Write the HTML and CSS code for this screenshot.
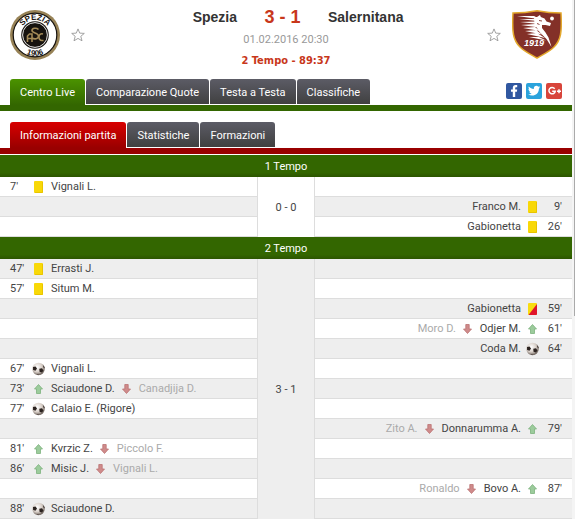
FILE: index.html
```html
<!DOCTYPE html>
<html lang="it">
  <head>
    <meta charset="UTF-8" />
    <meta name="viewport" content="width=device-width, initial-scale=1.0" />
    <title>Spezia - Salernitana 3-1</title>
    <link rel="stylesheet" href="styles.css">
  </head>
  <body>
    <!-- Icons -->
    <svg class="sprite" aria-hidden="true">
      <defs>
        <radialGradient id="ball-fill" cx="0.4" cy="0.35" r="0.65">
          <stop offset="0" stop-color="#fff" />
          <stop offset="0.6" stop-color="#d8cfc8" />
          <stop offset="1" stop-color="#6b6059" />
        </radialGradient>
        <symbol id="yellow" viewBox="0 0 14 14">
          <rect x="2" y="1" width="9" height="12" rx="1" fill="#f8d808" />
          <path d="M10.500 2v10.500H3" fill="none" stroke="#e8c400" />
        </symbol>
        <symbol id="yellowred" viewBox="0 0 14 14">
          <rect x="2" y="1" width="9" height="12" rx="1" fill="#f8dc10" />
          <path d="M11 2v10a1 1 0 0 1-1 1H2.500z" fill="#e0152b" />
        </symbol>
        <symbol id="up" viewBox="0 0 14 14">
          <path d="M6.500 2.500l4 4.500H8.500v4.500h-4V7h-2z" fill="#9ccb9c" stroke="#7db37d" stroke-width="0.800" />
        </symbol>
        <symbol id="down" viewBox="0 0 14 14">
          <path d="M6.500 11.500l4-4.500H8.200V2.500H4.800V7H2.500z" fill="#cf8b8b" stroke="#bb7272" stroke-width="0.800" />
        </symbol>
        <symbol id="ball" viewBox="0 0 14 14">
          <circle cx="6.500" cy="7" r="6.200" fill="url(#ball-fill)" />
          <path d="M1 5l2.500-.5 1.500 2L3.500 8.800 1.100 8z" fill="#2b2320" />
          <path d="M7.300 6.800l2.700-.6 1.500 2.200-1.500 2.200-2.500-.8z" fill="#2b2320" />
          <path d="M11 3l1.500 2 .1 1.500-1.300-1.300zM5.500 12l1.500.5-1.500.4z" fill="#3a302c" />
        </symbol>
        <symbol id="star" viewBox="0 0 14 14">
          <path d="M7 .9l1.700 4.200 4.600.3-3.500 2.900 1.200 4.500L7 10.400l-4 2.400 1.200-4.500L.7 5.400l4.600-.3z" fill="#fff" stroke="#999" stroke-width="0.900" />
        </symbol>
      </defs>
    </svg>

    <div class="page">
      <div class="match">
        <div class="team">
          <svg class="crest" viewBox="0 0 50 50" role="img" aria-label="Spezia">
            <circle cx="25" cy="25" r="25" fill="#978256" />
            <circle cx="25" cy="25" r="21.800" fill="#fff" stroke="#17130f" stroke-width="1.200" />
            <circle cx="25" cy="25" r="13.800" fill="#17130f" />
            <circle cx="25" cy="25" r="12.400" fill="none" stroke="#fff" stroke-width="0.900" />
            <path id="arc-top" d="M9.800 25a15.200 15.200 0 0 1 30.400 0" fill="none" />
            <path id="arc-bottom" d="M4.200 25a20.800 20.800 0 0 0 41.600 0" fill="none" />
            <text class="crest-text"><textPath href="#arc-top" startOffset="50%">SPEZIA</textPath></text>
            <text class="crest-text"><textPath href="#arc-bottom" startOffset="50%">1906</textPath></text>
            <g fill="none" stroke="#a38a58" stroke-width="1.600">
              <path d="M28.500 19.500c-2-2-6.500-1.500-6.500 1 0 2.800 6.500 2.200 6.500 5.500 0 3-4 3.500-6.500 2" />
              <path d="M17.500 32v-6l2-2h2.500v8M17.500 28.500h5" />
              <path d="M33 24c-5-1.500-5.500 6.500-1 6.500h1.500" />
            </g>
          </svg>
          <button class="fav" aria-label="Segui Spezia"><svg class="icon"><use href="#star" /></svg></button>
        </div>
        <div class="info">
          <div class="teams">
            <span class="home">Spezia</span>
            <span class="score">3 - 1</span>
            <span class="guest">Salernitana</span>
          </div>
          <div class="date">01.02.2016 20:30</div>
          <div class="status">2 Tempo - 89:37</div>
        </div>
        <div class="team">
          <button class="fav" aria-label="Segui Salernitana"><svg class="icon"><use href="#star" /></svg></button>
          <svg class="crest" viewBox="0 0 50 50" role="img" aria-label="Salernitana">
            <path d="M1 3Q13 3 25 .8 37 3 49 3C50 22 49 30 42 37 37 42 30 45 25 48 20 45 13 42 8 37 1 30 0 22 1 3z" fill="#833028" stroke="#e3a82c" stroke-width="1.500" />
            <!-- mane -->
            <path d="M5 6h17l3 1.500-2 1zM7 9l17 0 1 2zM8 12l15-.5 3 2.500zM9 15l14-1 4 3.500zM11 18l12-1 5 4zM13 21l11-1 6 4.500zM15 24l10-1 8 5zM17 27l10 0 7 3.500z" fill="#fff" />
            <!-- head and neck -->
            <path d="M22 7l3 0 3-2 .8 2 3.700 1.500 2 3 4.500 1.500-1 3-4.500-1-3.500 0 0 3 3.500 4.500 3 5 3 9.500-5-8-7-7-5-8z" fill="#fff" />
            <path d="M27 10.500l3 .5M25 13.500l2.500 1" stroke="#833028" stroke-width="0.900" />
            <circle cx="40" cy="8.500" r="1.900" fill="#fff" />
            <text class="crest-year" x="22" y="36">1919</text>
          </svg>
        </div>
      </div>

      <div class="bar green">
        <nav class="tabs">
          <a href="#" class="active">Centro Live</a>
          <a href="#">Comparazione Quote</a>
          <a href="#">Testa a Testa</a>
          <a href="#">Classifiche</a>
        </nav>
        <div class="social">
          <a href="#" aria-label="Facebook">
            <svg viewBox="0 0 16 16"><rect width="16" height="16" rx="2" fill="#3057a0" /><path d="M6.800 14V8.800H5V6.500h1.800V5c0-2 1-3 2.800-3h1.600v2.300h-1c-.8 0-1 .3-1 1v1.200h2L10.900 8.800H9.200V14z" fill="#fff" /></svg>
          </a>
          <a href="#" aria-label="Twitter">
            <svg viewBox="0 0 16 16"><rect width="16" height="16" rx="2" fill="#2ba3dc" /><path d="M2.800 3.500c1.300 1.500 3 2.400 5 2.500-.3-3 3-4 4.500-2.300l1.600-.6-1 1.500 1.300-.3-1.300 1.400c0 5.500-5.500 8.600-10.700 5.800 1.400 0 2.500-.3 3.400-1-1.200-.2-2-.8-2.300-1.800h1.100C3.100 8.200 2.400 7.200 2.500 6l1.100.3C2.500 5.500 2.300 4.500 2.800 3.500z" fill="#fff" /></svg>
          </a>
          <a href="#" aria-label="Google Plus">
            <svg viewBox="0 0 16 16"><rect width="16" height="16" rx="2" fill="#d8453b" /><path d="M8.700 5.700A3.200 3.200 0 1 0 9.300 8.200H6.200M11 8.200h4M13 6.200v4" fill="none" stroke="#fff" stroke-width="1.500" /></svg>
          </a>
        </div>
      </div>

      <div class="bar red">
        <nav class="tabs">
          <a href="#" class="active">Informazioni partita</a>
          <a href="#">Statistiche</a>
          <a href="#">Formazioni</a>
        </nav>
      </div>

      <table class="summary">
        <colgroup>
          <col class="side" />
          <col class="middle" />
          <col class="side" />
        </colgroup>
        <thead>
          <tr><th colspan="3">1 Tempo</th></tr>
        </thead>
        <tbody class="first">
          <tr>
            <td><div class="event"><span class="time">7'</span><svg class="icon"><use href="#yellow" /></svg><span>Vignali L.</span></div></td>
            <td class="result" rowspan="3">0 - 0</td>
            <td></td>
          </tr>
          <tr>
            <td></td>
            <td><div class="event away"><span class="time">9'</span><svg class="icon"><use href="#yellow" /></svg><span>Franco M.</span></div></td>
          </tr>
          <tr>
            <td></td>
            <td><div class="event away"><span class="time">26'</span><svg class="icon"><use href="#yellow" /></svg><span>Gabionetta</span></div></td>
          </tr>
        </tbody>
        <thead>
          <tr><th colspan="3">2 Tempo</th></tr>
        </thead>
        <tbody class="second">
          <tr>
            <td><div class="event"><span class="time">47'</span><svg class="icon"><use href="#yellow" /></svg><span>Errasti J.</span></div></td>
            <td class="result" rowspan="13">3 - 1</td>
            <td></td>
          </tr>
          <tr>
            <td><div class="event"><span class="time">57'</span><svg class="icon"><use href="#yellow" /></svg><span>Situm M.</span></div></td>
            <td></td>
          </tr>
          <tr>
            <td></td>
            <td><div class="event away"><span class="time">59'</span><svg class="icon"><use href="#yellowred" /></svg><span>Gabionetta</span></div></td>
          </tr>
          <tr>
            <td></td>
            <td><div class="event away"><span class="time">61'</span><svg class="icon"><use href="#up" /></svg><span>Odjer M.</span><svg class="icon"><use href="#down" /></svg><span class="out">Moro D.</span></div></td>
          </tr>
          <tr>
            <td></td>
            <td><div class="event away"><span class="time">64'</span><svg class="icon"><use href="#ball" /></svg><span>Coda M.</span></div></td>
          </tr>
          <tr>
            <td><div class="event"><span class="time">67'</span><svg class="icon"><use href="#ball" /></svg><span>Vignali L.</span></div></td>
            <td></td>
          </tr>
          <tr>
            <td><div class="event"><span class="time">73'</span><svg class="icon"><use href="#up" /></svg><span>Sciaudone D.</span><svg class="icon"><use href="#down" /></svg><span class="out">Canadjija D.</span></div></td>
            <td></td>
          </tr>
          <tr>
            <td><div class="event"><span class="time">77'</span><svg class="icon"><use href="#ball" /></svg><span>Calaio E. (Rigore)</span></div></td>
            <td></td>
          </tr>
          <tr>
            <td></td>
            <td><div class="event away"><span class="time">79'</span><svg class="icon"><use href="#up" /></svg><span>Donnarumma A.</span><svg class="icon"><use href="#down" /></svg><span class="out">Zito A.</span></div></td>
          </tr>
          <tr>
            <td><div class="event"><span class="time">81'</span><svg class="icon"><use href="#up" /></svg><span>Kvrzic Z.</span><svg class="icon"><use href="#down" /></svg><span class="out">Piccolo F.</span></div></td>
            <td></td>
          </tr>
          <tr>
            <td><div class="event"><span class="time">86'</span><svg class="icon"><use href="#up" /></svg><span>Misic J.</span><svg class="icon"><use href="#down" /></svg><span class="out">Vignali L.</span></div></td>
            <td></td>
          </tr>
          <tr>
            <td></td>
            <td><div class="event away"><span class="time">87'</span><svg class="icon"><use href="#up" /></svg><span>Bovo A.</span><svg class="icon"><use href="#down" /></svg><span class="out">Ronaldo</span></div></td>
          </tr>
          <tr>
            <td><div class="event"><span class="time">88'</span><svg class="icon"><use href="#ball" /></svg><span>Sciaudone D.</span></div></td>
            <td></td>
          </tr>
        </tbody>
      </table>
    </div>
    <div class="scroll"><div class="thumb"></div></div>
  </body>
</html>
```

FILE: styles.css
```css
html {
  overflow: hidden;
}
body {
  margin: 0;
  display: flex;
  background: #fff;
  color: #444;
  font-family: Roboto, "Noto Sans", sans-serif;
  font-size: 11px;
  line-height: 15px;
}
a {
  color: inherit;
  text-decoration: none;
}
.sprite {
  position: absolute;
  width: 0;
  height: 0;
}
.page {
  flex: 1;
  min-width: 0;
}
.icon {
  display: block;
  width: 14px;
  height: 14px;
  flex: none;
}

/* match header */
.match {
  display: flex;
  align-items: flex-start;
  padding: 10px 10px 0;
}
.team {
  display: flex;
  align-items: center;
  gap: 11px;
}
.crest {
  display: block;
  width: 50px;
  height: 50px;
}
.crest-text {
  font: bold 8px "Liberation Sans", sans-serif;
  text-anchor: middle;
  fill: #17130f;
}
.crest-year {
  font: italic bold 9px "Liberation Sans", sans-serif;
  text-anchor: middle;
  fill: #fff;
}
.fav {
  padding: 0;
  border: 0;
  background: none;
}
.info {
  flex: 1;
  text-align: center;
}
.teams {
  display: grid;
  grid-template-columns: 1fr 91px 1fr;
  align-items: center;
  padding-right: 7px;
  height: 14px;
  color: #333;
  font-family: "Liberation Sans", sans-serif;
  font-size: 14px;
  font-weight: bold;
}
.home {
  text-align: right;
}
.guest {
  text-align: left;
}
.score {
  color: #c8371b;
  font-size: 18px;
}
.date {
  margin-top: 8px;
  color: #999;
}
.status {
  margin-top: 6px;
  color: #c8371b;
  font-family: "DejaVu Sans Condensed", "DejaVu Sans", sans-serif;
  font-weight: bold;
}

/* tabs */
.bar {
  display: flex;
  justify-content: space-between;
  padding: 0 10px;
}
.bar.green {
  margin-top: 11px;
  border-bottom: 6px solid #360;
}
.bar.red {
  margin-top: 11px;
  border-bottom: 6px solid #900;
}
.tabs {
  display: flex;
  gap: 1px;
}
.tabs a {
  height: 25px;
  margin-bottom: 1px;
  padding: 0 10px;
  border-radius: 3px 3px 0 0;
  background: linear-gradient(#5c5c66, #404040);
  color: #fff;
  line-height: 27px;
}
.tabs .active {
  height: 26px;
  margin-bottom: 0;
}
.green .active {
  background: linear-gradient(#4b9300, #360);
}
.red .active {
  background: linear-gradient(#d80000, #900);
}
.social {
  display: flex;
  gap: 4px;
  padding-top: 4px;
}
.social svg {
  display: block;
  width: 16px;
  height: 16px;
}

/* match events */
.summary {
  width: 100%;
  margin-top: 1px;
  table-layout: fixed;
  border-spacing: 0;
}
.side {
  width: 45%;
}
.middle {
  width: 10%;
}
.summary th {
  height: 22px;
  padding: 0;
  background: linear-gradient(#360 80%, #2c5500);
  color: #fff;
  font-weight: normal;
}
.summary td {
  box-sizing: border-box;
  height: 20px;
  padding: 0;
  border-bottom: 1px solid #ddd;
}
.first tr:nth-child(even),
.second tr:nth-child(odd) {
  background: #eee;
}
.summary .result {
  border: solid #ddd;
  border-width: 0 1px;
  text-align: center;
}
.event {
  display: flex;
  align-items: center;
  gap: 5px;
  padding: 0 10px;
  white-space: nowrap;
}
.event.away {
  flex-direction: row-reverse;
}
.time {
  flex: none;
  width: 17px;
}
.away .time {
  text-align: right;
}
.out {
  color: #aaa;
}

.scroll {
  width: 3px;
  background: #f4f4f4;
}
.thumb {
  height: 316px;
  border-right: 1px solid #aaa;
}
```
